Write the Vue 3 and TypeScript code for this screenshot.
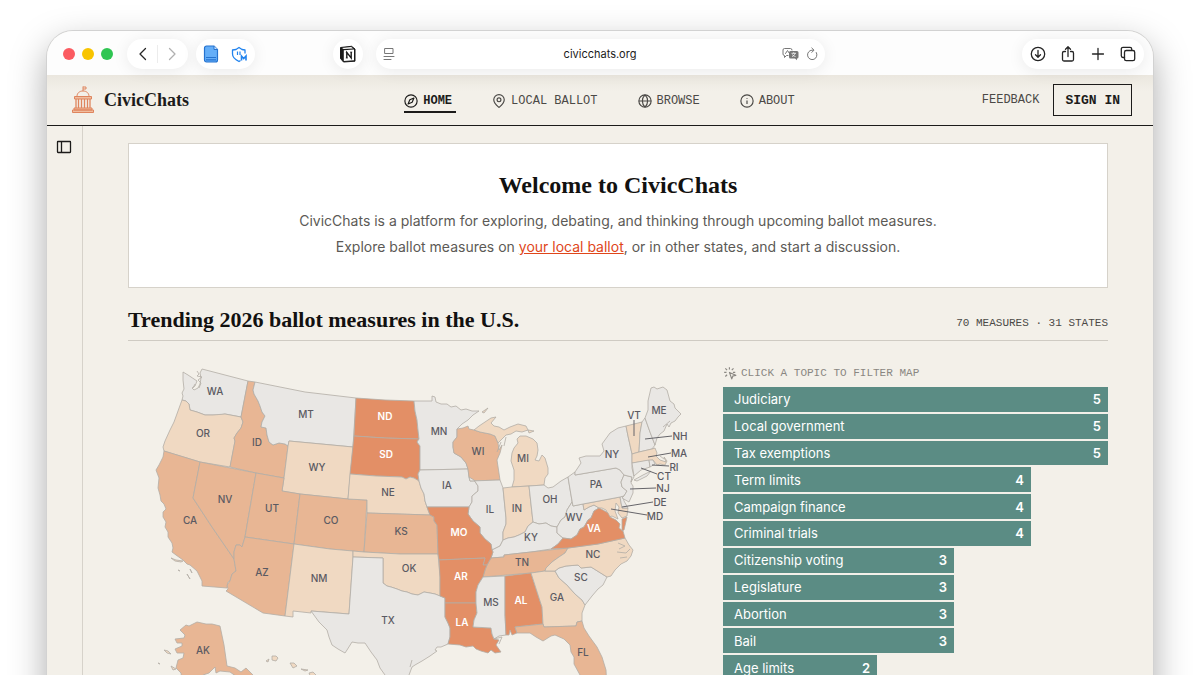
<script setup lang="ts">
import { computed, ref } from 'vue'

type Level = 'none' | 'low' | 'mid' | 'high'

interface StateShape {
  id: string
  level: Level
  d: string
  label: [number, number]
  leader?: [number, number, number, number]
}

interface Topic {
  name: string
  count: number
}

const address = ref('civicchats.org')

const topics: Topic[] = [
  { name: 'Judiciary', count: 5 },
  { name: 'Local government', count: 5 },
  { name: 'Tax exemptions', count: 5 },
  { name: 'Term limits', count: 4 },
  { name: 'Campaign finance', count: 4 },
  { name: 'Criminal trials', count: 4 },
  { name: 'Citizenship voting', count: 3 },
  { name: 'Legislature', count: 3 },
  { name: 'Abortion', count: 3 },
  { name: 'Bail', count: 3 },
  { name: 'Age limits', count: 2 },
]

const largest = computed(() => Math.max(...topics.map((t) => t.count)))
const barWidth = (t: Topic) => `${(t.count / largest.value) * 100}%`

const states: StateShape[] = [
  { id: 'WA', level: 'none', label: [215, 391], d: 'M183 372L188 375L194 379L197 381L195 386L192 388L194 390L198 388L200 384L201 378L200 373L202 369L225 375L248 381L241 417L225 414L219 415L213 415L205 415L197 412L190 410L189 404L186 401L182 400L183 396L182 393L184 389L183 380Z' },
  { id: 'OR', level: 'low', label: [203, 433], d: 'M182 400L186 401L189 404L190 410L197 412L205 415L213 415L225 414L241 417L243 422L241 428L237 433L234 438L235 441L230 467L200 462L164 451L163 447L165 441L170 430L174 422L178 411Z' },
  { id: 'ID', level: 'mid', label: [257, 442], d: 'M248 381L255 382L253 390L254 394L258 401L260 406L262 412L265 416L262 422L261 427L266 428L267 435L269 442L273 445L279 443L285 444L288 446L284 478L256 473L230 467L235 441L234 438L237 433L241 428L243 422L241 417Z' },
  { id: 'MT', level: 'none', label: [306, 414], d: 'M255 382L305 392L356 398L353 447L289 441L288 446L285 444L279 443L273 445L269 442L267 435L266 428L261 427L262 422L265 416L262 412L260 406L258 401L254 394L253 390Z' },
  { id: 'WY', level: 'low', label: [317, 467], d: 'M289 441L353 447L348 499L300 494L282 491L284 478L288 446Z' },
  { id: 'CA', level: 'mid', label: [190, 520], d: 'M164 451L200 462L193 498L212 527L234 559L236 571L232 574L230 581L228 582L227 588L202 586L202 581L200 577L197 571L190 565L187 564L183 560L176 555L172 552L173 548L172 543L168 537L168 532L165 527L166 522L163 517L163 512L166 509L164 504L161 501L160 495L158 488L159 478L156 470L159 465L163 457Z' },
  { id: 'NV', level: 'mid', label: [225, 499], d: 'M200 462L256 473L245 537L242 547L240 545L236 545L234 552L234 559L212 527L193 498Z' },
  { id: 'UT', level: 'mid', label: [272, 508], d: 'M256 473L284 478L282 491L300 494L294 544L245 537Z' },
  { id: 'CO', level: 'mid', label: [331, 520], d: 'M300 494L348 499L367 500L364 552L330 549L294 544Z' },
  { id: 'AZ', level: 'mid', label: [262, 572], d: 'M245 537L294 544L285 616L263 613L226 591L228 589L227 585L230 581L232 574L236 571L234 559L234 552L236 545L240 545L242 547Z' },
  { id: 'NM', level: 'low', label: [319, 578], d: 'M294 544L330 549L353 551L353 557L349 614L311 611L311 613L293 611L293 617L285 616Z' },
  { id: 'ND', level: 'high', label: [385, 416], d: 'M356 398L385 400L414 401L415 411L417 420L418 430L419 439L385 438L354 436Z' },
  { id: 'SD', level: 'high', label: [386, 454], d: 'M354 436L385 438L419 439L417 442L420 446L420 470L418 474L419 481L414 478L410 477L406 479L402 477L376 476L350 474Z' },
  { id: 'NE', level: 'low', label: [388, 492], d: 'M350 474L376 476L402 477L406 479L410 477L414 478L419 481L421 488L424 494L425 501L427 507L430 515L367 513L367 500L348 499Z' },
  { id: 'KS', level: 'mid', label: [401, 531], d: 'M367 513L430 515L434 517L434 521L437 525L438 554L400 554L364 552Z' },
  { id: 'OK', level: 'low', label: [409, 568], d: 'M353 551L364 552L400 554L438 554L440 577L440 596L435 594L430 593L424 592L418 595L412 594L407 592L402 591L397 589L391 587L387 586L383 583L383 558L353 557Z' },
  { id: 'TX', level: 'none', label: [388, 620], d: 'M353 557L383 558L383 583L387 586L391 587L397 589L402 591L407 592L412 594L418 595L424 592L430 593L435 594L440 596L445 598L445 617L448 623L450 628L450 637L448 644L441 647L437 647L435 650L437 651L430 656L422 661L415 665L412 667L409 675L407 690L390 690L385 675L380 668L377 660L371 652L365 643L358 643L352 642L347 650L345 653L338 649L332 645L329 637L327 630L319 622L311 611L349 614Z' },
  { id: 'MN', level: 'none', label: [439, 431], d: 'M414 401L432 401L432 396L435 397L436 402L441 404L447 404L451 407L456 406L461 410L466 409L472 411L479 411L473 415L468 420L462 424L457 429L457 437L453 442L453 447L454 453L461 457L466 463L468 469L420 470L420 446L417 442L419 439L418 430L417 420L415 411Z' },
  { id: 'IA', level: 'none', label: [447, 485], d: 'M420 470L468 469L469 477L474 480L478 486L478 491L472 496L472 502L469 507L427 507L425 501L424 494L421 488L419 481L418 474Z' },
  { id: 'WI', level: 'mid', label: [478, 451], d: 'M457 429L463 428L468 426L469 429L474 430L480 432L490 434L495 436L498 443L499 450L502 445L500 453L497 460L500 480L470 481L469 477L468 469L466 463L461 457L454 453L453 447L453 442L457 437Z' },
  { id: 'MI', level: 'low', label: [523, 458], d: 'M474 430L479 426L485 422L491 418L496 417L491 423L494 426L499 427L504 430L510 427L518 424L526 426L528 430L522 432L516 431L511 434L506 435L502 439L498 443L495 436L490 434L480 432ZM520 436L526 436L533 439L537 443L538 450L537 456L535 460L539 461L542 455L545 458L548 468L548 474L545 478L544 485L529 486L512 487L514 480L514 470L511 461L512 453L514 448L518 443L517 439Z' },
  { id: 'IL', level: 'none', label: [490, 509], d: 'M470 481L500 480L503 488L506 518L506 524L503 532L503 540L500 546L494 549L492 550L491 544L485 539L480 533L480 527L473 521L468 514L469 507L472 502L472 496L478 491L478 486L474 480L469 477Z' },
  { id: 'IN', level: 'low', label: [517, 508], d: 'M503 488L512 487L529 486L533 522L528 526L525 532L519 535L514 537L508 538L503 540L503 532L506 524L506 518Z' },
  { id: 'OH', level: 'none', label: [550, 499], d: 'M529 486L544 485L548 488L553 487L561 481L568 477L571 495L572 502L567 510L565 517L561 520L557 527L551 526L546 523L539 524L533 522Z' },
  { id: 'KY', level: 'none', label: [531, 537], d: 'M533 522L539 524L546 523L551 526L557 527L557 533L563 538L558 544L551 549L531 552L504 555L504 557L491 558L493 552L492 550L494 549L500 546L503 540L508 538L514 537L519 535L525 532L528 526Z' },
  { id: 'TN', level: 'mid', label: [522, 562], d: 'M491 558L504 557L504 555L531 552L568 548L565 553L559 557L552 562L546 568L545 571L531 573L483 577L485 570L487 565Z' },
  { id: 'MO', level: 'high', label: [459, 532], d: 'M427 507L469 507L468 514L473 521L480 527L480 533L485 539L491 544L492 550L493 552L491 558L487 565L483 565L485 558L439 560L438 554L437 525L434 521L434 517L430 515Z' },
  { id: 'AR', level: 'high', label: [461, 576], d: 'M439 560L485 558L483 565L487 565L485 570L483 577L478 585L476 592L476 603L445 603L445 598L440 596L440 577Z' },
  { id: 'LA', level: 'high', label: [462, 622], d: 'M445 603L476 603L477 613L474 620L473 627L491 628L492 634L494 639L499 640L496 645L501 652L495 653L491 650L488 653L481 651L476 649L473 646L466 647L460 645L448 644L450 637L450 628L448 623L445 617Z' },
  { id: 'MS', level: 'none', label: [491, 602], d: 'M483 577L505 576L505 615L506 635L499 636L494 639L492 634L491 628L473 627L474 620L477 613L476 603L476 592L478 585Z' },
  { id: 'AL', level: 'high', label: [521, 600], d: 'M505 576L531 573L540 601L542 607L543 624L515 627L517 633L512 635L510 630L509 635L506 635L505 615Z' },
  { id: 'GA', level: 'low', label: [557, 597], d: 'M531 573L545 571L555 571L559 578L567 585L575 594L582 600L585 605L582 613L582 621L577 622L576 626L544 627L543 624L542 607L540 601Z' },
  { id: 'FL', level: 'mid', label: [583, 652], d: 'M515 627L543 624L544 627L576 626L577 622L582 621L584 628L589 636L597 647L602 657L606 670L607 690L585 690L580 675L574 664L574 657L571 652L570 645L564 639L555 635L551 636L543 641L536 637L530 633L517 633Z' },
  { id: 'SC', level: 'none', label: [581, 577], d: 'M555 571L559 568L566 566L578 565L581 568L591 567L607 577L603 585L598 589L592 596L585 605L582 600L575 594L567 585L559 578Z' },
  { id: 'NC', level: 'low', label: [593, 554], d: 'M568 548L598 544L625 538L629 545L633 550L631 556L627 561L621 564L615 570L611 576L607 577L591 567L581 568L578 565L566 566L559 568L555 571L545 571L546 568L552 562L559 557L565 553Z' },
  { id: 'WV', level: 'none', label: [574, 517], d: 'M572 502L573 506L583 504L584 510L589 507L594 505L599 508L594 511L591 518L588 520L584 527L580 529L577 535L571 539L563 538L557 533L557 527L561 520L565 517L567 510Z' },
  { id: 'MD', level: 'low', label: [655, 516], leader: [611, 509, 647, 515], d: 'M583 504L620 497L622 508L628 508L627 516L622 518L618 513L619 507L616 503L615 511L618 519L612 516L609 517L606 510L602 508L599 508L594 505L589 507L584 510Z' },
  { id: 'VA', level: 'high', label: [594, 528], d: 'M551 549L558 544L563 538L571 539L577 535L580 529L584 527L588 520L591 518L594 511L599 508L603 510L608 513L610 517L616 520L620 524L619 528L623 531L625 538L598 544L568 548ZM622 519L627 517L624 530L622 531Z' },
  { id: 'DE', level: 'none', label: [660, 502], leader: [622, 507, 653, 502], d: 'M620 497L623 496L624 501L628 508L622 508Z' },
  { id: 'PA', level: 'none', label: [596, 484], d: 'M568 477L575 472L575 475L616 468L620 470L624 475L621 482L622 487L627 491L624 496L620 497L583 504L573 506L571 495Z' },
  { id: 'NJ', level: 'none', label: [663, 488], leader: [630, 489, 656, 488], d: 'M624 475L632 477L631 483L633 486L633 493L629 502L622 498L624 496L627 491L622 487L621 482Z' },
  { id: 'NY', level: 'none', label: [612, 454], d: 'M575 475L575 472L581 463L579 458L586 456L600 456L604 451L602 444L610 433L618 428L626 426L628 436L630 445L632 454L632 468L634 477L631 482L632 477L624 475L620 470L616 468ZM634 480L643 475L651 471L647 476L637 481Z' },
  { id: 'VT', level: 'low', label: [634, 415], leader: [634, 420, 634, 436], d: 'M626 426L642 422L640 433L639 452L632 454L630 445L628 436Z' },
  { id: 'NH', level: 'none', label: [680, 436], leader: [645, 439, 672, 436], d: 'M642 422L645 418L650 432L655 445L652 449L639 452L640 433Z' },
  { id: 'MA', level: 'low', label: [679, 453], leader: [648, 457, 671, 453], d: 'M632 454L639 452L652 449L655 448L657 453L656 456L660 460L666 462L664 457L667 461L665 465L660 464L657 465L653 460L632 463Z' },
  { id: 'CT', level: 'none', label: [664, 476], leader: [641, 468, 657, 474], d: 'M632 463L649 460L650 467L641 470L634 476Z' },
  { id: 'RI', level: 'none', label: [674, 467], leader: [652, 465, 669, 466], d: 'M649 460L653 460L655 464L650 467Z' },
  { id: 'ME', level: 'none', label: [659, 410], d: 'M645 418L648 410L648 401L651 388L654 387L657 389L663 387L667 390L670 401L674 404L675 408L681 414L678 417L675 421L671 423L669 427L667 424L664 431L660 434L657 438L655 445L650 432Z' },
  { id: 'AK', level: 'mid', label: [203, 650], d: 'M197 622L206 624L212 624L220 626L224 645L227 666L235 668L241 672L246 668L256 678L262 690L245 690L240 679L230 672L220 671L216 673L215 667L209 673L203 675L196 690L183 690L181 673L176 668L178 660L183 658L184 653L177 653L175 649L182 646L182 643L177 643L175 639L184 638L185 635L180 630L186 625L189 626Z' },
]

const ISLANDS =
  'M171 558L176 560L183 561L181 562L175 561ZM178 570L180 571ZM190 569L192 573ZM187 574L190 579ZM164 650L168 651L171 654L167 653ZM158 663L160 664ZM171 666L176 669L173 670ZM266 661L269 659L268 662ZM272 656L276 656L278 658L276 661L272 660ZM290 663L294 663L297 666L293 668ZM301 669L308 670L305 671ZM309 673L313 672L317 676L311 678ZM482 412L488 408L484 413ZM528 430L534 431L529 433Z'

const INLETS =
  'M197 371L199 374L197 376L202 377L198 380L201 383L199 388M195 384L193 388M618 543L625 546L619 549M617 552L626 553L630 549M620 558L627 557M494 639L502 637L499 644M663 427L670 421M660 456L664 459M412 660L410 667M501 442L497 452M506 437L504 446'
</script>

<template>
  <div class="desktop">
    <div class="window">
      <div class="toolbar">
        <div class="side">
          <div class="lights">
            <button class="light red" aria-label="Close"></button>
            <button class="light yellow" aria-label="Minimise"></button>
            <button class="light green" aria-label="Zoom"></button>
          </div>
          <div class="pill history">
            <button aria-label="Back">
              <svg width="16" height="16" viewBox="0 0 16 16"><path class="ink" d="M10.500 2.500L5 8l5.500 5.500" /></svg>
            </button>
            <span class="divider"></span>
            <button aria-label="Forward">
              <svg width="16" height="16" viewBox="0 0 16 16"><path class="ink faint" d="M5.500 2.500L11 8l-5.500 5.500" /></svg>
            </button>
          </div>
          <div class="pill extensions">
            <button aria-label="Reader extension">
              <svg width="16" height="18" viewBox="0 0 16 18">
                <path d="M3.500 1h7.500L14.500 4.500V15a2 2 0 0 1-2 2h-9a2 2 0 0 1-2-2V3a2 2 0 0 1 2-2z" fill="#64aef8" stroke="#2472cf" stroke-width="1.200" />
                <path d="M3 12.500h10M3 14.800h10" stroke="#2472cf" stroke-width="1.200" />
                <path d="M11 1v3.500h3.500" fill="#c9e2fd" stroke="#2472cf" />
              </svg>
            </button>
            <button aria-label="Privacy extension">
              <svg width="17" height="17" viewBox="0 0 17 17">
                <path d="M14 7.500V4L11 3.500 8 1.500 5 3.500 1.500 4v4c0 3.500 2.500 5.500 6.500 7.500l1.500-1" fill="none" stroke="#2183ee" stroke-width="1.300" stroke-linejoin="round" />
                <path d="M6.500 5.500v3.500M9 5.500v3.500" stroke="#2183ee" stroke-width="1.200" />
                <path d="M10.500 14.500V10l2.200 2.500L15 10v4.500" fill="none" stroke="#2183ee" stroke-width="1.600" />
              </svg>
            </button>
          </div>
          <div class="pill notion">
            <button aria-label="Notion">
              <svg width="18" height="18" viewBox="0 0 18 18">
                <path d="M1.500 2.500L12.500 1.300 16 4v12.200L4.500 17 1.500 13.500z" fill="#1b1b1b" stroke="#1b1b1b" stroke-linejoin="round" />
                <path d="M4.800 5.200L15 4.600v10.700l-10.200.600z" fill="#fff" />
                <path d="M3 2.900l9.200-.8 1.800 1.300-9.400.6z" fill="#fff" />
                <path d="M7.800 13V7.400l4.400 5.600V7" fill="none" stroke="#1b1b1b" stroke-width="1.400" />
                <path d="M6.800 7.400h1.500M6.800 13h2M11.200 7.100h2" stroke="#1b1b1b" stroke-width=".8" />
              </svg>
            </button>
          </div>
        </div>

        <div class="pill address">
          <button aria-label="Page menu">
            <svg width="12" height="14" viewBox="0 0 12 14"><path class="thin" d="M2 1.500h8v5H2zM1 9.500h10M1 12.500h7" /></svg>
          </button>
          <input v-model="address" type="text" aria-label="Address" />
          <button aria-label="Translate">
            <svg width="18" height="14" viewBox="0 0 18 14">
              <path class="thin" d="M6 8.500H4.500l-2 2v-2H2.500a1.500 1.500 0 0 1-1.500-1.500V3a1.500 1.500 0 0 1 1.500-1.500h6A1.500 1.500 0 0 1 10 3" />
              <path class="thin" d="M3.500 6.500l2-3 2 3" />
              <path d="M8.500 4h6.500a1.500 1.500 0 0 1 1.500 1.500V10a1.500 1.500 0 0 1-1.500 1.500v1.800l-2-1.800H8.500A1.500 1.500 0 0 1 7 10V5.500A1.500 1.500 0 0 1 8.500 4z" fill="#777" />
              <path d="M9.500 6.300h4.500M11.700 5.300v1M13 6.500c-.5 1.500-1.500 2.500-3 3M10.500 7.500c.5 1 1.500 1.700 3 2" fill="none" stroke="#fff" stroke-width=".8" />
            </svg>
          </button>
          <button aria-label="Reload">
            <svg width="12" height="14" viewBox="0 0 12 14"><path class="thin" d="M10.300 5.500A4.700 4.700 0 1 1 6 3.200h1.500M5.800 1l2.200 2.200L5.800 5.400" /></svg>
          </button>
        </div>

        <div class="side end">
          <div class="pill actions">
            <button aria-label="Downloads">
              <svg width="16" height="16" viewBox="0 0 16 16"><circle class="ink" cx="8" cy="8" r="6.700" /><path class="ink" d="M8 4.500v6.500M5.500 8.700L8 11.200l2.500-2.500" /></svg>
            </button>
            <button aria-label="Share">
              <svg width="16" height="16" viewBox="0 0 16 16"><path class="ink" d="M5.500 5.500h-1.500a1.500 1.500 0 0 0-1.500 1.500v6.500A1.500 1.500 0 0 0 4 15h8a1.500 1.500 0 0 0 1.500-1.500V7A1.500 1.500 0 0 0 12 5.500h-1.500M8 10.500V.900M5.500 3.300L8 .800l2.500 2.500" /></svg>
            </button>
            <button aria-label="New tab">
              <svg width="16" height="16" viewBox="0 0 16 16"><path class="ink" d="M8 2.500v11M2.500 8h11" /></svg>
            </button>
            <button aria-label="Tab overview">
              <svg width="16" height="16" viewBox="0 0 16 16"><path class="ink" d="M4.500 11.500H3A1.700 1.700 0 0 1 1.300 9.800V3A1.700 1.700 0 0 1 3 1.300h7A1.700 1.700 0 0 1 11.700 3v1" /><rect class="ink" x="4.500" y="4.500" width="10.200" height="10.200" rx="1.800" /></svg>
            </button>
          </div>
        </div>
      </div>

      <header class="site-header">
        <a class="brand" href="#">
          <svg width="24" height="28" viewBox="0 0 24 28" fill="none" stroke="#df855e">
            <path d="M12 5V.500M12 1h3v2h-3" />
            <path d="M6 10.500c0-3.500 2.500-5.500 6-5.500s6 2 6 5.500" />
            <path d="M3.500 10.500h17v2.500h-17z" fill="#f0bd9f" />
            <path d="M5 13v9M7.500 13v9M10.500 13v9M13.500 13v9M16.500 13v9M19 13v9" stroke-width="1.300" />
            <path d="M3 22h18v2H3zM1.500 24h21v2.500h-21z" fill="#f0bd9f" />
          </svg>
          <span>CivicChats</span>
        </a>
        <nav>
          <a class="current" href="#" aria-current="page">
            <svg width="14" height="14" viewBox="0 0 24 24"><circle cx="12" cy="12" r="10.500" /><path d="M17 7l-3 7-7 3 3-7z" /></svg>
            HOME
          </a>
          <a href="#">
            <svg width="14" height="14" viewBox="0 0 24 24"><path d="M21 10c0 6-6 10.500-9 13-3-2.500-9-7-9-13a9 9 0 0 1 18 0z" /><circle cx="12" cy="10" r="3.300" /></svg>
            LOCAL BALLOT
          </a>
          <a href="#">
            <svg width="14" height="14" viewBox="0 0 24 24"><circle cx="12" cy="12" r="10.500" /><path d="M1.500 12h21M12 1.500c-6 6-6 15 0 21M12 1.500c6 6 6 15 0 21" /></svg>
            BROWSE
          </a>
          <a href="#">
            <svg width="14" height="14" viewBox="0 0 24 24"><circle cx="12" cy="12" r="10.500" /><path d="M12 17v-6M12 7v1" /></svg>
            ABOUT
          </a>
        </nav>
        <div class="account">
          <a href="#">FEEDBACK</a>
          <button>SIGN IN</button>
        </div>
      </header>

      <div class="body">
        <aside>
          <button aria-label="Open sidebar">
            <svg width="16" height="14" viewBox="0 0 16 14" fill="none" stroke="#1c1b1a" stroke-width="1.300"><rect x="1.500" y="1.500" width="13" height="11" rx=".5" /><path d="M5.500 1.500v11" /></svg>
          </button>
        </aside>
        <main>
          <section class="welcome">
            <h1>Welcome to CivicChats</h1>
            <p>CivicChats is a platform for exploring, debating, and thinking through upcoming ballot measures.</p>
            <p>Explore ballot measures on <a href="#">your local ballot</a>, or in other states, and start a discussion.</p>
          </section>

          <div class="section-head">
            <h2>Trending 2026 ballot measures in the U.S.</h2>
            <span>70 MEASURES · 31 STATES</span>
          </div>

          <div class="explore">
            <svg class="map" viewBox="128 357 576 333" role="img" aria-label="Ballot measures by state">
              <g class="shapes">
                <path v-for="s in states" :key="s.id" :d="s.d" :class="s.level" />
                <path class="low" :d="ISLANDS" />
                <path class="inlet" :d="INLETS" />
              </g>
              <g class="leaders">
                <template v-for="s in states" :key="s.id">
                  <line v-if="s.leader" :x1="s.leader[0]" :y1="s.leader[1]" :x2="s.leader[2]" :y2="s.leader[3]" />
                </template>
              </g>
              <g class="labels">
                <text v-for="s in states" :key="s.id" :x="s.label[0]" :y="s.label[1]" dy="4" :class="s.level">{{ s.id }}</text>
              </g>
            </svg>

            <section class="topics">
              <p class="hint">
                <svg width="14" height="14" viewBox="0 0 24 24"><path d="M11 11l4 11 2-5 5-1zM11 2v4M4 4l3 3M2 11h4M4 18l3-3M18 4l-3 3M17 11h4" /></svg>
                CLICK A TOPIC TO FILTER MAP
              </p>
              <div class="bars">
                <button v-for="t in topics" :key="t.name" :style="{ width: barWidth(t) }">
                  <span>{{ t.name }}</span>
                  <b>{{ t.count }}</b>
                </button>
              </div>
            </section>
          </div>
        </main>
      </div>
    </div>
  </div>
</template>

<style>
html,
body {
  margin: 0;
  background: #fff;
}
</style>

<style scoped>
* {
  box-sizing: border-box;
}

button,
input {
  margin: 0;
  padding: 0;
  border: 0;
  background: none;
  font: inherit;
  color: inherit;
}

button {
  cursor: pointer;
}

h1,
h2,
p {
  margin: 0;
}

.desktop {
  height: 100vh;
  overflow: hidden;
  padding: 31px 47px 0;
  font-family: Inter, 'Liberation Sans', sans-serif;
  color: #1c1b1a;
}

.window {
  min-height: 120vh;
  border-radius: 26px;
  overflow: hidden;
  background: #f3f0e9;
  box-shadow: 0 0 0 1px #d2d2d2, 0 14px 36px rgba(0, 0, 0, 0.34);
}

.toolbar {
  display: grid;
  grid-template-columns: minmax(0, 1fr) minmax(0, 449px) minmax(0, 1fr);
  align-items: center;
  column-gap: 13px;
  height: 44px;
  padding: 2px 9px 0;
  background: #fdfdfd;
}

.side {
  display: flex;
  align-items: center;
}

.side.end {
  justify-content: flex-end;
}

.lights {
  display: flex;
  gap: 7px;
  margin: 0 14px 0 7px;
}

.light {
  width: 12px;
  height: 12px;
  border-radius: 50%;
}

.red {
  background: #fb5b61;
}

.yellow {
  background: #f8c400;
}

.green {
  background: #2fc552;
}

.pill {
  position: relative;
  z-index: 1;
  display: flex;
  align-items: center;
  justify-content: center;
  height: 30px;
  border-radius: 15px;
  background: #fff;
  box-shadow: 0 2px 16px rgba(0, 0, 0, 0.08);
}

.pill button {
  display: flex;
}

.history {
  width: 61px;
  gap: 6px;
}

.divider {
  width: 1px;
  height: 18px;
  background: #ececec;
}

.extensions {
  width: 59px;
  margin-left: 8px;
  gap: 12px;
}

.notion {
  width: 30px;
  margin-left: auto;
}

.address {
  gap: 6px;
  padding: 0 7px;
}

.address input {
  flex: 1;
  min-width: 0;
  padding-left: 24px;
  text-align: center;
  font-size: 11px;
  outline: none;
}

.actions {
  width: 122px;
  gap: 14px;
}

.ink {
  fill: none;
  stroke: #252525;
  stroke-width: 1.3;
  stroke-linecap: round;
  stroke-linejoin: round;
}

.faint {
  stroke: #b0b0b0;
}

.thin {
  fill: none;
  stroke: #777;
  stroke-linecap: round;
  stroke-linejoin: round;
}

.site-header {
  display: grid;
  grid-template-columns: 1fr auto 1fr;
  align-items: center;
  height: 51px;
  padding: 0 21px 0 24px;
  border-bottom: 1px solid #1c1b1a;
  background: linear-gradient(#ebe7df, #f3f0e9 16px);
  font-family: 'Liberation Mono', monospace;
  font-size: 12px;
}

a {
  color: inherit;
  text-decoration: none;
}

.brand {
  display: flex;
  align-items: center;
  gap: 9px;
  font-family: 'Liberation Serif', serif;
  font-size: 18px;
  line-height: 24px;
  font-weight: 700;
}

nav {
  display: flex;
  gap: 36px;
}

nav a {
  display: flex;
  align-items: center;
  gap: 5px;
  height: 26px;
  padding: 3px 4px 0 0;
  border-bottom: 2px solid transparent;
  color: #4b4946;
}

nav a.current {
  border-color: #1c1b1a;
  color: #1c1b1a;
  font-weight: 700;
}

nav svg,
.hint svg {
  fill: none;
  stroke: currentColor;
  stroke-width: 2;
  stroke-linejoin: round;
}

.account {
  display: flex;
  align-items: center;
  justify-content: flex-end;
  gap: 14px;
  color: #4b4946;
}

.account button {
  height: 32px;
  padding: 0 11px;
  border: 1px solid #1c1b1a;
  font-size: 13px;
  font-weight: 700;
  color: #1c1b1a;
}

.body {
  display: flex;
}

aside {
  flex: none;
  width: 36px;
  min-height: 100vh;
  padding: 14px 9px;
  border-right: 1px solid #d6d2ca;
}

aside button {
  display: flex;
}

main {
  flex: 1;
  min-width: 0;
  padding: 17px 45px 0;
}

.welcome {
  padding: 28px 20px 27px;
  border: 1px solid #d6d2ca;
  background: #fff;
  text-align: center;
  font-size: 14px;
  line-height: 26px;
  color: #5c5a56;
}

.welcome h1 {
  margin-bottom: 10px;
  font: 700 24px/26px 'Liberation Serif', serif;
  color: #121110;
}

.welcome a {
  color: #e0461a;
  text-decoration: underline;
}

.section-head {
  display: flex;
  align-items: center;
  justify-content: space-between;
  height: 53px;
  padding-top: 12px;
  border-bottom: 1px solid #cfcbc3;
}

.section-head h2 {
  font: 700 22px/28px 'Liberation Serif', serif;
  color: #121110;
}

.section-head span {
  padding-top: 6px;
  font: 11px/16px 'Liberation Mono', monospace;
  color: #4b4946;
}

.explore {
  display: grid;
  grid-template-columns: minmax(0, 576fr) minmax(0, 385fr);
  column-gap: 19px;
  padding-top: 16px;
}

.map {
  display: block;
  width: 100%;
}

.shapes path {
  stroke: #b3ada6;
  stroke-width: 0.8;
  stroke-linejoin: round;
}

.shapes .none {
  fill: #e9e7e4;
}

.shapes .low {
  fill: #f0d9c2;
}

.shapes .mid {
  fill: #e8b694;
}

.shapes .high {
  fill: #e38f66;
}

.shapes .inlet {
  fill: none;
}

.leaders line {
  stroke: #66656a;
  stroke-width: 1;
}

.labels text {
  font-size: 10px;
  font-weight: 500;
  text-anchor: middle;
  fill: #5b5a62;
}

.labels .high {
  fill: #fff;
  font-weight: 600;
}

.topics {
  padding-top: 8px;
}

.hint {
  display: flex;
  align-items: center;
  gap: 4px;
  height: 16px;
  margin-bottom: 6px;
  font: 11px/16px 'Liberation Mono', monospace;
  color: #8a8782;
}

.bars {
  display: grid;
  grid-auto-rows: 1fr;
  gap: 2px;
  height: 293px;
}

.bars button {
  display: flex;
  align-items: center;
  justify-content: space-between;
  padding: 0 7px 0 11px;
  background: #5b8c84;
  color: #fff;
  font-size: 13px;
}

.bars b {
  font-weight: 600;
}
</style>
